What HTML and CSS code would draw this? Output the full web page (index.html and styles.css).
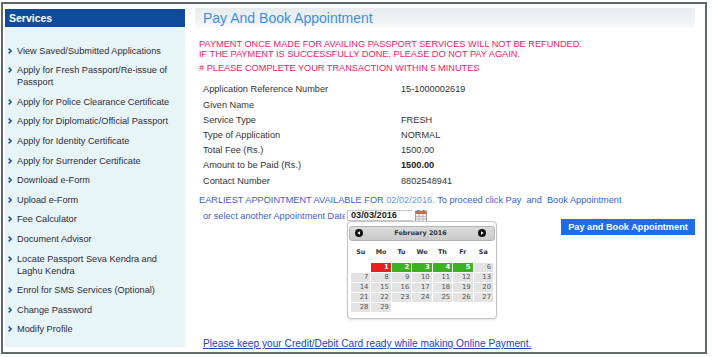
FILE: index.html
```html
<!DOCTYPE html>
<html lang="en">
<head>
<meta charset="utf-8">
<title>Pay And Book Appointment</title>
<link rel="stylesheet" href="styles.css">
</head>
<body>
<div class="frame">
  <aside class="sidebar">
    <div class="side-title">Services</div>
    <ul class="side-list">
      <li><span class="chev"><svg width="4" height="6" viewBox="0 0 4 6"><polyline points="0.6,0.6 3.2,3 0.6,5.4" fill="none" stroke="#1d4f9f" stroke-width="1.5"/></svg></span><span class="side-text">View Saved/Submitted Applications</span></li>
      <li><span class="chev"><svg width="4" height="6" viewBox="0 0 4 6"><polyline points="0.6,0.6 3.2,3 0.6,5.4" fill="none" stroke="#1d4f9f" stroke-width="1.5"/></svg></span><span class="side-text">Apply for Fresh Passport/Re-issue of Passport</span></li>
      <li><span class="chev"><svg width="4" height="6" viewBox="0 0 4 6"><polyline points="0.6,0.6 3.2,3 0.6,5.4" fill="none" stroke="#1d4f9f" stroke-width="1.5"/></svg></span><span class="side-text">Apply for Police Clearance Certificate</span></li>
      <li><span class="chev"><svg width="4" height="6" viewBox="0 0 4 6"><polyline points="0.6,0.6 3.2,3 0.6,5.4" fill="none" stroke="#1d4f9f" stroke-width="1.5"/></svg></span><span class="side-text">Apply for Diplomatic/Official Passport</span></li>
      <li><span class="chev"><svg width="4" height="6" viewBox="0 0 4 6"><polyline points="0.6,0.6 3.2,3 0.6,5.4" fill="none" stroke="#1d4f9f" stroke-width="1.5"/></svg></span><span class="side-text">Apply for Identity Certificate</span></li>
      <li><span class="chev"><svg width="4" height="6" viewBox="0 0 4 6"><polyline points="0.6,0.6 3.2,3 0.6,5.4" fill="none" stroke="#1d4f9f" stroke-width="1.5"/></svg></span><span class="side-text">Apply for Surrender Certificate</span></li>
      <li><span class="chev"><svg width="4" height="6" viewBox="0 0 4 6"><polyline points="0.6,0.6 3.2,3 0.6,5.4" fill="none" stroke="#1d4f9f" stroke-width="1.5"/></svg></span><span class="side-text">Download e-Form</span></li>
      <li><span class="chev"><svg width="4" height="6" viewBox="0 0 4 6"><polyline points="0.6,0.6 3.2,3 0.6,5.4" fill="none" stroke="#1d4f9f" stroke-width="1.5"/></svg></span><span class="side-text">Upload e-Form</span></li>
      <li><span class="chev"><svg width="4" height="6" viewBox="0 0 4 6"><polyline points="0.6,0.6 3.2,3 0.6,5.4" fill="none" stroke="#1d4f9f" stroke-width="1.5"/></svg></span><span class="side-text">Fee Calculator</span></li>
      <li><span class="chev"><svg width="4" height="6" viewBox="0 0 4 6"><polyline points="0.6,0.6 3.2,3 0.6,5.4" fill="none" stroke="#1d4f9f" stroke-width="1.5"/></svg></span><span class="side-text">Document Advisor</span></li>
      <li><span class="chev"><svg width="4" height="6" viewBox="0 0 4 6"><polyline points="0.6,0.6 3.2,3 0.6,5.4" fill="none" stroke="#1d4f9f" stroke-width="1.5"/></svg></span><span class="side-text">Locate Passport Seva Kendra and Laghu Kendra</span></li>
      <li><span class="chev"><svg width="4" height="6" viewBox="0 0 4 6"><polyline points="0.6,0.6 3.2,3 0.6,5.4" fill="none" stroke="#1d4f9f" stroke-width="1.5"/></svg></span><span class="side-text">Enrol for SMS Services (Optional)</span></li>
      <li><span class="chev"><svg width="4" height="6" viewBox="0 0 4 6"><polyline points="0.6,0.6 3.2,3 0.6,5.4" fill="none" stroke="#1d4f9f" stroke-width="1.5"/></svg></span><span class="side-text">Change Password</span></li>
      <li><span class="chev"><svg width="4" height="6" viewBox="0 0 4 6"><polyline points="0.6,0.6 3.2,3 0.6,5.4" fill="none" stroke="#1d4f9f" stroke-width="1.5"/></svg></span><span class="side-text">Modify Profile</span></li>
    </ul>
  </aside>

  <main class="main">
    <div class="page-head"><h1>Pay And Book Appointment</h1></div>

    <div class="notice">
      <p>PAYMENT ONCE MADE FOR AVAILING PASSPORT SERVICES WILL NOT BE REFUNDED.</p>
      <p>IF THE PAYMENT IS SUCCESSFULLY DONE, PLEASE DO NOT PAY AGAIN.</p>
      <p class="notice-gap"># PLEASE COMPLETE YOUR TRANSACTION WITHIN 5 MINUTES</p>
    </div>

    <dl class="details">
      <dt>Application Reference Number</dt><dd>15-1000002619</dd>
      <dt>Given Name</dt><dd></dd>
      <dt>Service Type</dt><dd>FRESH</dd>
      <dt>Type of Application</dt><dd>NORMAL</dd>
      <dt>Total Fee (Rs.)</dt><dd>1500.00</dd>
      <dt>Amount to be Paid (Rs.)</dt><dd class="strong">1500.00</dd>
      <dt>Contact Number</dt><dd>8802548941</dd>
    </dl>

    <p class="earliest">EARLIEST APPOINTMENT AVAILABLE FOR <span class="date-hi">02/02/2016.</span> To proceed click <span class="act">Pay&nbsp; and&nbsp; Book Appointment</span></p>

    <div class="date-row">
      <div class="date-pick">
        <span class="date-label">or select another Appointment Date</span>
        <span class="date-field">
          <span class="date-input">03/03/2016</span>
          <svg class="cal-icon" width="12" height="12" viewBox="0 0 12 12">
            <rect x="0.5" y="1" width="11" height="10.5" fill="#eeeeee" stroke="#9a9a9a" stroke-width="1"/>
            <rect x="0.5" y="1" width="11" height="3" fill="#e4672e"/>
            <rect x="2.5" y="0" width="1.5" height="2.5" fill="#7a7a7a"/>
            <rect x="8" y="0" width="1.5" height="2.5" fill="#7a7a7a"/>
            <path d="M1 6.5H11M1 9H11M4 4V11.5M8 4V11.5" stroke="#b5b5b5" stroke-width="0.8"/>
          </svg>
          <div class="datepicker">
            <div class="dp-head">
              <span class="dp-nav"><svg width="8" height="8" viewBox="0 0 8 8"><circle cx="4" cy="4" r="4" fill="#111"/><polygon points="2.3,4 5,2.2 5,5.8" fill="#fff"/></svg></span>
              <span class="dp-title">February 2016</span>
              <span class="dp-nav"><svg width="8" height="8" viewBox="0 0 8 8"><circle cx="4" cy="4" r="4" fill="#111"/><polygon points="5.7,4 3,2.2 3,5.8" fill="#fff"/></svg></span>
            </div>
            <table class="dp-grid">
              <thead>
                <tr><th>Su</th><th>Mo</th><th>Tu</th><th>We</th><th>Th</th><th>Fr</th><th>Sa</th></tr>
              </thead>
              <tbody>
                <tr><td class="empty"></td><td class="red">1</td><td class="green">2</td><td class="green">3</td><td class="green">4</td><td class="green">5</td><td>6</td></tr>
                <tr><td>7</td><td>8</td><td>9</td><td>10</td><td>11</td><td>12</td><td>13</td></tr>
                <tr><td>14</td><td>15</td><td>16</td><td>17</td><td>18</td><td>19</td><td>20</td></tr>
                <tr><td>21</td><td>22</td><td>23</td><td>24</td><td>25</td><td>26</td><td>27</td></tr>
                <tr><td>28</td><td>29</td><td class="empty"></td><td class="empty"></td><td class="empty"></td><td class="empty"></td><td class="empty"></td></tr>
              </tbody>
            </table>
          </div>
        </span>
      </div>
      <button class="pay-btn" type="button">Pay and Book Appointment</button>
    </div>

    <a class="card-note" href="#">Please keep your Credit/Debit Card ready while making Online Payment.</a>
  </main>
</div>
</body>
</html>
```

FILE: styles.css
```css
* { box-sizing: border-box; margin: 0; padding: 0; }

html, body {
  width: 712px;
  height: 357px;
  overflow: hidden;
  background: #ffffff;
}

body {
  font-family: "Liberation Sans", Arial, sans-serif;
  font-size: 9.2px;
  color: #333333;
}

.frame {
  margin: 2px 0 0 1px;
  width: 706px;
  height: 352px;
  border: 2px solid #5e6a6a;
  display: flex;
}

/* ---------- sidebar ---------- */
.sidebar {
  width: 180px;
  flex: none;
  margin: 5px 0 5px 2px;
  background: #e8f5f6;
}

.side-title {
  height: 18px;
  background: #0f4b9b;
  color: #ffffff;
  font-weight: bold;
  font-size: 10.5px;
  line-height: 18px;
  padding-left: 4px;
}

.side-list {
  list-style: none;
  padding: 17.7px 0 0 3px;
}

.side-list li {
  display: flex;
  align-items: flex-start;
  gap: 5px;
  line-height: 12px;
  margin-bottom: 7.6px;
  color: #2b2b3b;
}

.chev {
  flex: none;
  width: 4px;
  height: 12px;
  display: flex;
  align-items: center;
}

.side-text { width: 160px; }

/* ---------- main ---------- */
.main {
  flex: 1;
  padding: 4px 10px 0 10px;
  display: flex;
  flex-direction: column;
  align-items: flex-start;
}

.page-head {
  align-self: stretch;
  height: 20px;
  background: linear-gradient(to bottom, #e6ebee 0%, #f1f4f5 70%, #fafbfb 100%);
  padding-left: 8px;
}

.page-head h1 {
  font-weight: normal;
  font-size: 14px;
  line-height: 20px;
  color: #3b8ee6;
}

.notice {
  margin-top: 11.3px;
  padding-left: 4px;
  color: #f2186a;
  line-height: 10px;
}

.notice-gap { margin-top: 3.4px; }

.details {
  margin-top: 9.7px;
  padding-left: 8px;
  display: grid;
  grid-template-columns: 198px auto;
  line-height: 15.2px;
  color: #333333;
}

.details dd.strong { font-weight: bold; color: #222222; }

.earliest {
  margin-top: 5.2px;
  padding-left: 4px;
  line-height: 12px;
  color: #3d5fcf;
}

.date-hi { color: #5c9de2; }
.act { color: #2f63d8; }

.date-row {
  align-self: stretch;
  margin-top: 3.7px;
  display: flex;
  justify-content: space-between;
  align-items: flex-start;
}

.date-pick {
  padding-left: 8px;
  display: flex;
  align-items: center;
  height: 12px;
}

.date-label {
  width: 142px;
  margin-right: 2px;
  white-space: nowrap;
  overflow: hidden;
  color: #3d5fcf;
}

.date-field {
  position: relative;
  display: flex;
  align-items: center;
}

.date-input {
  width: 66px;
  height: 11px;
  border: 1px solid #c9c9c9;
  border-right-color: #ffffff;
  background: #ffffff;
  font-weight: bold;
  color: #222222;
  padding-left: 3px;
  line-height: 9px;
}

.cal-icon { margin-left: 2px; }

.pay-btn {
  margin-top: 9.3px;
  width: 134px;
  height: 16px;
  border: none;
  background: #1c6fe3;
  color: #ffffff;
  font-family: "Liberation Sans", Arial, sans-serif;
  font-weight: bold;
  font-size: 9.2px;
}

.card-note {
  margin-top: 103px;
  padding-left: 8px;
  font-size: 10.2px;
  line-height: 12px;
  color: #2a40c8;
  text-decoration: underline;
}

/* ---------- datepicker popup ---------- */
.datepicker {
  position: absolute;
  top: 11px;
  left: 0;
  width: 150px;
  background: #ffffff;
  border: 1px solid #c4c4c4;
  border-radius: 4px;
  padding: 4px 1px 5px 1px;
  box-shadow: 0 1px 2px rgba(0, 0, 0, 0.12);
  font-family: "DejaVu Sans", Verdana, sans-serif;
}

.dp-head {
  height: 15px;
  background: linear-gradient(to bottom, #dcdcdc, #c9c9c9);
  border: 1px solid #b3b3b3;
  border-radius: 3px;
  display: flex;
  align-items: center;
  justify-content: space-between;
  padding: 0 8px 0 5px;
}

.dp-nav { display: flex; }

.dp-title {
  font-weight: bold;
  font-size: 6.4px;
  color: #333333;
}

.dp-grid {
  margin: 0 0 0 1px;
  width: 144px;
  border-collapse: separate;
  border-spacing: 1px;
  table-layout: fixed;
}

.dp-grid th {
  height: 20px;
  font-weight: bold;
  font-size: 6.4px;
  color: #333333;
  text-align: center;
}

.dp-grid td {
  height: 9px;
  line-height: 9px;
  font-size: 6.8px;
  color: #555555;
  text-align: right;
  padding-right: 2px;
  background: #e3e3e3;
}

.dp-grid td.empty { background: transparent; }

.dp-grid td.red {
  background: #e8201e;
  color: #ffffff;
  font-weight: bold;
}

.dp-grid td.green {
  background: #3bb320;
  color: #ffffff;
  font-weight: bold;
}
```
